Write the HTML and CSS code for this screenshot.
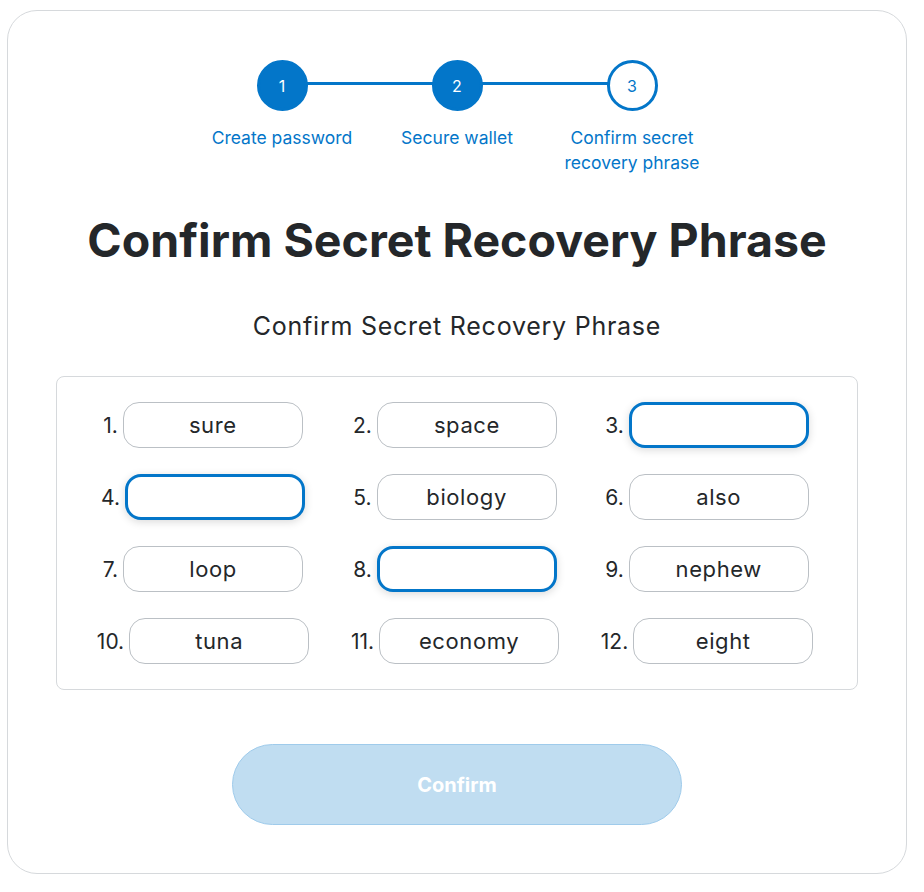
FILE: index.html
```html
<!DOCTYPE html>
<html lang="en">
<head>
<meta charset="utf-8">
<title>Confirm Secret Recovery Phrase</title>
<link rel="stylesheet" href="styles.css">
</head>
<body>
<main class="card">
  <ol class="stepper">
    <li class="step done">
      <span class="dot">1</span>
      <span class="label">Create password</span>
    </li>
    <li class="step done">
      <span class="dot">2</span>
      <span class="label">Secure wallet</span>
    </li>
    <li class="step current">
      <span class="dot">3</span>
      <span class="label">Confirm secret recovery phrase</span>
    </li>
  </ol>

  <h1 class="title">Confirm Secret Recovery Phrase</h1>
  <h2 class="subtitle">Confirm Secret Recovery Phrase</h2>

  <div class="phrase">
    <div class="word"><span class="num">1.</span><input class="box" value="sure" readonly></div>
    <div class="word"><span class="num">2.</span><input class="box" value="space" readonly></div>
    <div class="word"><span class="num">3.</span><input class="box focus" value=""></div>
    <div class="word"><span class="num">4.</span><input class="box focus" value=""></div>
    <div class="word"><span class="num">5.</span><input class="box" value="biology" readonly></div>
    <div class="word"><span class="num">6.</span><input class="box" value="also" readonly></div>
    <div class="word"><span class="num">7.</span><input class="box" value="loop" readonly></div>
    <div class="word"><span class="num">8.</span><input class="box focus" value=""></div>
    <div class="word"><span class="num">9.</span><input class="box" value="nephew" readonly></div>
    <div class="word"><span class="num">10.</span><input class="box" value="tuna" readonly></div>
    <div class="word"><span class="num">11.</span><input class="box" value="economy" readonly></div>
    <div class="word"><span class="num">12.</span><input class="box" value="eight" readonly></div>
  </div>

  <div class="actions">
    <button class="confirm" disabled>Confirm</button>
  </div>
</main>
</body>
</html>
```

FILE: styles.css
```css
* { box-sizing: border-box; }

html, body {
  margin: 0;
  background: #ffffff;
}

body {
  padding: 10px 17px 18px 7px;
  font-family: "Inter", "Noto Sans", sans-serif;
  color: #24272a;
}

.card {
  border: 1px solid #d6d9dc;
  border-radius: 30px;
  height: 864px;
  padding: 49px 48px 0 48px;
  display: flex;
  flex-direction: column;
  align-items: center;
}

.stepper {
  list-style: none;
  margin: 0;
  padding: 0;
  display: flex;
  justify-content: center;
  width: 525px;
}

.step {
  position: relative;
  flex: 1 1 0;
  display: flex;
  flex-direction: column;
  align-items: center;
}

.step + .step::before {
  content: "";
  position: absolute;
  top: 22px;
  right: 50%;
  width: 100%;
  height: 3px;
  background: #0376c9;
  z-index: 0;
}

.dot {
  position: relative;
  z-index: 1;
  width: 51px;
  height: 51px;
  border-radius: 50%;
  border: 3px solid #0376c9;
  background: #ffffff;
  color: #0376c9;
  display: flex;
  align-items: center;
  justify-content: center;
  font-size: 16px;
}

.step.done .dot {
  background: #0376c9;
  color: #ffffff;
}

.label {
  margin-top: 14px;
  width: 160px;
  text-align: center;
  font-size: 17.5px;
  line-height: 25px;
  color: #0376c9;
  letter-spacing: 0;
}

.title {
  margin: 37px 0 0 0;
  font-size: 46.5px;
  line-height: 56px;
  font-weight: 700;
  letter-spacing: 0;
  text-align: center;
  color: #24272a;
}

.subtitle {
  margin: 42px 0 0 0;
  font-size: 25px;
  line-height: 32px;
  font-weight: 400;
  letter-spacing: 0.75px;
  text-align: center;
  color: #24272a;
}

.phrase {
  margin-top: 34px;
  width: 802px;
  border: 1px solid #d6d9dc;
  border-radius: 8px;
  padding: 25px 27px 25px 23px;
  display: grid;
  grid-template-columns: repeat(3, 252px);
  justify-content: center;
  row-gap: 26px;
}

.word {
  display: flex;
  align-items: center;
  justify-content: center;
  gap: 5px;
}

.num {
  font-size: 21px;
  color: #24272a;
}

.box {
  width: 180px;
  height: 46px;
  border: 1px solid #bbc0c5;
  border-radius: 16px;
  background: #ffffff;
  text-align: center;
  font-family: inherit;
  font-size: 22px;
  letter-spacing: 0.6px;
  color: #24272a;
  padding: 0 8px;
  outline: none;
}

.box.focus {
  border: 3px solid #0376c9;
  box-shadow: 0 2px 8px rgba(0, 0, 0, 0.15);
}

.actions {
  margin-top: 54px;
  display: flex;
  justify-content: center;
}

.confirm {
  width: 450px;
  height: 81px;
  border-radius: 41px;
  border: 1px solid #9fcbeb;
  background: #c0ddf1;
  color: #ffffff;
  font-family: inherit;
  font-size: 20px;
  font-weight: 700;
}
```
